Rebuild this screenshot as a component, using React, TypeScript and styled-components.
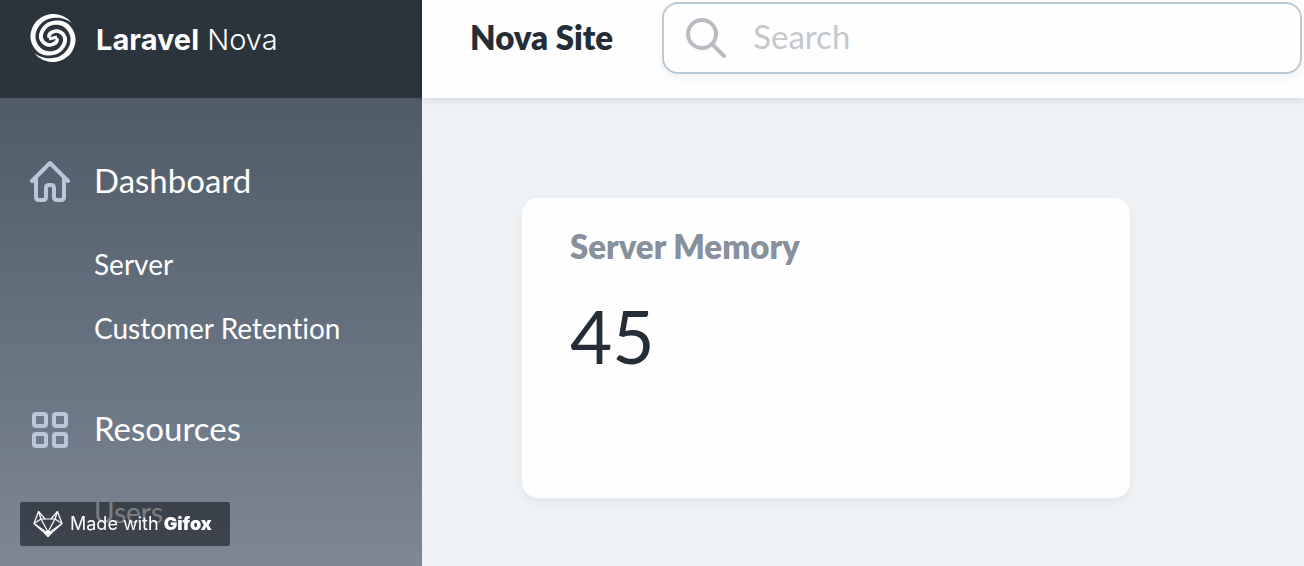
import React from "react";
import styled, { createGlobalStyle } from "styled-components";

const GlobalStyle = createGlobalStyle`
  *, *::before, *::after { box-sizing: border-box; }
  body {
    margin: 0;
    font-family: Lato, "Open Sans", sans-serif;
    font-variant-ligatures: none;
    color: #252d37;
    background: #eef2f5;
  }
`;

const Page = styled.div`
  display: flex;
  min-height: 100vh;
`;

const Sidebar = styled.aside`
  flex: 0 0 422px;
  background: linear-gradient(#4f5b69 98px, #7d8795);
`;

const Brand = styled.a`
  display: flex;
  align-items: center;
  gap: 20px;
  height: 98px;
  padding: 0 30px 22px;
  background: #2b333d;
  color: #fff;
  text-decoration: none;
`;

const BrandName = styled.span`
  font-family: Inter, sans-serif;
  font-size: 29px;
  line-height: 36px;
  font-weight: 300;
  padding-top: 4px;

  strong { font-weight: 700; }
`;

const Nav = styled.nav`
  padding: 58px 30px 0;
`;

const NavGroup = styled.section`
  & + & { margin-top: 56px; }
`;

const NavHeading = styled.h2`
  display: flex;
  align-items: center;
  gap: 24px;
  margin: 0 0 40px;
  font-size: 33px;
  line-height: 48px;
  font-weight: 400;
  color: #fff;

  svg { flex: none; }
`;

const NavList = styled.ul`
  display: flex;
  flex-direction: column;
  gap: 24px;
  margin: 0;
  padding: 0 0 0 64px;
  list-style: none;
`;

const NavLink = styled.a`
  display: block;
  font-size: 28px;
  line-height: 40px;
  color: #fff;
  text-decoration: none;
`;

const Main = styled.div`
  flex: 1;
  min-width: 0;
`;

const TopBar = styled.header`
  display: flex;
  align-items: flex-start;
  gap: 49px;
  height: 98px;
  padding: 2px 2px 0 48px;
  background: #fefefe;
  box-shadow: 0 2px 8px rgba(0, 0, 0, 0.1);
`;

const SiteLink = styled.a`
  font-size: 33px;
  line-height: 70px;
  font-weight: 800;
  white-space: nowrap;
  color: #252d37;
  text-decoration: none;
`;

const SearchBox = styled.label`
  flex: 1;
  display: flex;
  align-items: center;
  gap: 26px;
  min-width: 0;
  height: 72px;
  padding: 0 22px;
  border: 2px solid #bacad6;
  border-radius: 16px;
  background: #fefefe;
  box-shadow: 0 4px 8px rgba(0, 0, 0, 0.05);

  svg { flex: none; }
`;

const SearchInput = styled.input`
  flex: 1;
  min-width: 0;
  border: 0;
  padding: 0 0 4px;
  outline: 0;
  background: none;
  font: 400 33px/48px Lato, "Open Sans", sans-serif;
  color: #252d37;

  &::placeholder { color: #c5c9ce; opacity: 1; }
`;

const Cards = styled.main`
  display: flex;
  flex-wrap: wrap;
  padding: 100px 100px 60px;
`;

const Card = styled.article`
  flex: 0 1 608px;
  min-height: 300px;
  padding: 28px 48px;
  border-radius: 16px;
  background: #fefefe;
  box-shadow: 0 4px 8px rgba(0, 0, 0, 0.05);
`;

const CardTitle = styled.h3`
  margin: 0 0 20px;
  font-size: 33px;
  line-height: 40px;
  font-weight: 800;
  color: #87909b;
`;

const CardValue = styled.p`
  margin: 0;
  font-size: 73px;
  line-height: 100px;
`;

const MadeWith = styled.a`
  position: fixed;
  left: 20px;
  bottom: 20px;
  display: flex;
  align-items: center;
  gap: 7px;
  width: 210px;
  height: 44px;
  padding: 0 13px;
  border-radius: 2px;
  background: rgba(3, 8, 12, 0.52);
  color: #fff;
  font-family: Inter, sans-serif;
  font-size: 18px;
  line-height: 24px;
  white-space: nowrap;
  text-decoration: none;

  svg { flex: none; }
  strong { font-weight: 900; }
`;

// [angle in degrees, radius, arm thickness], from the outer tip to the centre
const ARM: [number, number, number][] = [
  [38, 24, 0],
  [60, 23, 2],
  [90, 22, 4],
  [135, 21, 5],
  [180, 20, 5],
  [225, 18, 5],
  [270, 15, 4],
  [315, 13, 4],
  [360, 12, 4],
  [405, 9, 4],
  [450, 6, 4],
  [495, 5, 4],
  [540, 4, 3],
];

function spiralArm(): string {
  const outer: string[] = [];
  const inner: string[] = [];
  for (let angle = 38; angle <= 540; angle += 4) {
    const i = Math.max(1, ARM.findIndex((k) => k[0] >= angle));
    const [a0, r0, w0] = ARM[i - 1];
    const [a1, r1, w1] = ARM[i];
    const t = (angle - a0) / (a1 - a0);
    const r = r0 + (r1 - r0) * t;
    const w = (w0 + (w1 - w0) * t) / 2;
    const rad = (angle * Math.PI) / 180;
    const at = (d: number) => `${(Math.cos(rad) * d).toFixed(2)} ${(-Math.sin(rad) * d).toFixed(2)}`;
    outer.push(at(r + w));
    inner.unshift(at(r - w));
  }
  return `M${outer.concat(inner).join("L")}Z`;
}

const armPath = spiralArm();

const NovaMark = () => (
  <svg width="46" height="48" viewBox="-23 -24 46 48" fill="#fff" aria-hidden="true">
    <path d={armPath} />
    <path d={armPath} transform="rotate(180)" />
    <path d="M-4 1L4 -1" stroke="#fff" strokeWidth="3" />
  </svg>
);

const HomeIcon = () => (
  <svg width="40" height="44" viewBox="0 0 40 44" fill="none" stroke="#b9c8d6" strokeWidth="4" strokeLinecap="round" strokeLinejoin="round" aria-hidden="true">
    <path d="M2 23L20 5L38 23" />
    <path d="M6 20V39Q6 42 9 42H13Q16 42 16 39V30Q16 27 19 27H21Q24 27 24 30V39Q24 42 27 42H31Q34 42 34 39V20" />
  </svg>
);

const GridIcon = () => (
  <svg width="40" height="44" viewBox="0 0 40 44" fill="none" stroke="#b9c8d6" strokeWidth="4" aria-hidden="true">
    <rect x="4" y="8" width="12" height="12" rx="2" />
    <rect x="24" y="8" width="12" height="12" rx="2" />
    <rect x="4" y="28" width="12" height="12" rx="2" />
    <rect x="24" y="28" width="12" height="12" rx="2" />
  </svg>
);

const SearchIcon = () => (
  <svg width="41" height="41" viewBox="0 0 41 41" fill="none" stroke="#b9bdc3" strokeWidth="4" strokeLinecap="round" aria-hidden="true">
    <circle cx="16" cy="16" r="14" />
    <path d="M26 26L38 38" />
  </svg>
);

const FoxIcon = () => (
  <svg width="30" height="28" viewBox="0 0 30 28" fill="none" stroke="#fff" strokeWidth="1.2" strokeLinejoin="round" aria-hidden="true">
    <path d="M5.5 1.5L1 13.5L15 26L29 13.5L24.5 1.5L18 9H12Z" />
    <path d="M5.5 1.5L8 9L1 13.5M24.5 1.5L22 9L29 13.5" />
    <path d="M12 9H8L15 22L22 9H18" />
    <path d="M1 13.5L13 22M29 13.5L17 22" />
    <path d="M12.5 21.5H17.5L18 23.5L15 26.5L12 23.5Z" fill="#fff" />
  </svg>
);

export default function App() {
  return (
    <>
      <GlobalStyle />
      <Page>
        <Sidebar>
          <Brand href="#">
            <NovaMark />
            <BrandName>
              <strong>Laravel</strong> Nova
            </BrandName>
          </Brand>
          <Nav>
            <NavGroup>
              <NavHeading>
                <HomeIcon />
                Dashboard
              </NavHeading>
              <NavList>
                <li><NavLink href="#server">Server</NavLink></li>
                <li><NavLink href="#retention">Customer Retention</NavLink></li>
              </NavList>
            </NavGroup>
            <NavGroup>
              <NavHeading>
                <GridIcon />
                Resources
              </NavHeading>
              <NavList>
                <li><NavLink href="#users">Users</NavLink></li>
              </NavList>
            </NavGroup>
          </Nav>
        </Sidebar>
        <Main>
          <TopBar>
            <SiteLink href="#">Nova Site</SiteLink>
            <SearchBox>
              <SearchIcon />
              <SearchInput type="search" placeholder="Search" aria-label="Search" />
            </SearchBox>
          </TopBar>
          <Cards>
            <Card>
              <CardTitle>Server Memory</CardTitle>
              <CardValue>45</CardValue>
            </Card>
          </Cards>
        </Main>
      </Page>
      <MadeWith href="#gifox">
        <FoxIcon />
        <span>Made with <strong>Gifox</strong></span>
      </MadeWith>
    </>
  );
}
